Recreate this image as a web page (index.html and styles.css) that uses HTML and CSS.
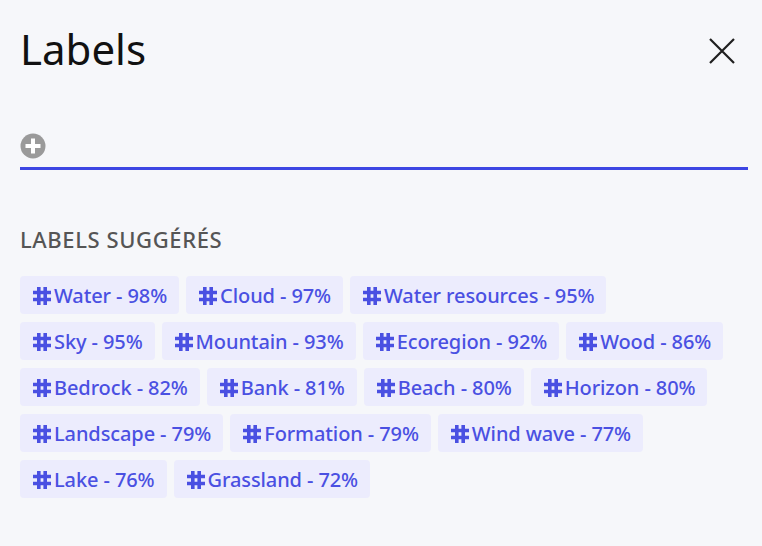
FILE: index.html
```html
<!DOCTYPE html>
<html lang="fr">
<head>
<meta charset="utf-8">
<title>Labels</title>
<link rel="stylesheet" href="styles.css">
</head>
<body>
<div class="panel">
  <header class="header">
    <h1 class="title">Labels</h1>
    <button class="close" aria-label="Fermer">
      <svg width="26" height="26" viewBox="0 0 26 26"><path d="M1 1L25 25M25 1L1 25" stroke="#1f1f1f" stroke-width="2.2" fill="none"/></svg>
    </button>
  </header>
  <div class="input-row">
    <svg class="plus" width="26" height="26" viewBox="0 0 26 26"><circle cx="13" cy="13" r="12.5" fill="#9a9a9a"/><path d="M13 5.5V20.5M5.5 13H20.5" stroke="#fff" stroke-width="4"/></svg>
  </div>
  <h2 class="section">LABELS SUGGÉRÉS</h2>
  <div class="chips">
    <span class="chip"><svg class="hash" viewBox="0 0 18 18"><path d="M4 0h3.6v18H4zM10.4 0H14v18h-3.6zM0 3.7h18v3.6H0zM0 10.7h18v3.6H0z"/></svg>Water - 98%</span>
    <span class="chip"><svg class="hash" viewBox="0 0 18 18"><path d="M4 0h3.6v18H4zM10.4 0H14v18h-3.6zM0 3.7h18v3.6H0zM0 10.7h18v3.6H0z"/></svg>Cloud - 97%</span>
    <span class="chip"><svg class="hash" viewBox="0 0 18 18"><path d="M4 0h3.6v18H4zM10.4 0H14v18h-3.6zM0 3.7h18v3.6H0zM0 10.7h18v3.6H0z"/></svg>Water resources - 95%</span>
    <span class="chip"><svg class="hash" viewBox="0 0 18 18"><path d="M4 0h3.6v18H4zM10.4 0H14v18h-3.6zM0 3.7h18v3.6H0zM0 10.7h18v3.6H0z"/></svg>Sky - 95%</span>
    <span class="chip"><svg class="hash" viewBox="0 0 18 18"><path d="M4 0h3.6v18H4zM10.4 0H14v18h-3.6zM0 3.7h18v3.6H0zM0 10.7h18v3.6H0z"/></svg>Mountain - 93%</span>
    <span class="chip"><svg class="hash" viewBox="0 0 18 18"><path d="M4 0h3.6v18H4zM10.4 0H14v18h-3.6zM0 3.7h18v3.6H0zM0 10.7h18v3.6H0z"/></svg>Ecoregion - 92%</span>
    <span class="chip"><svg class="hash" viewBox="0 0 18 18"><path d="M4 0h3.6v18H4zM10.4 0H14v18h-3.6zM0 3.7h18v3.6H0zM0 10.7h18v3.6H0z"/></svg>Wood - 86%</span>
    <span class="chip"><svg class="hash" viewBox="0 0 18 18"><path d="M4 0h3.6v18H4zM10.4 0H14v18h-3.6zM0 3.7h18v3.6H0zM0 10.7h18v3.6H0z"/></svg>Bedrock - 82%</span>
    <span class="chip"><svg class="hash" viewBox="0 0 18 18"><path d="M4 0h3.6v18H4zM10.4 0H14v18h-3.6zM0 3.7h18v3.6H0zM0 10.7h18v3.6H0z"/></svg>Bank - 81%</span>
    <span class="chip"><svg class="hash" viewBox="0 0 18 18"><path d="M4 0h3.6v18H4zM10.4 0H14v18h-3.6zM0 3.7h18v3.6H0zM0 10.7h18v3.6H0z"/></svg>Beach - 80%</span>
    <span class="chip"><svg class="hash" viewBox="0 0 18 18"><path d="M4 0h3.6v18H4zM10.4 0H14v18h-3.6zM0 3.7h18v3.6H0zM0 10.7h18v3.6H0z"/></svg>Horizon - 80%</span>
    <span class="chip"><svg class="hash" viewBox="0 0 18 18"><path d="M4 0h3.6v18H4zM10.4 0H14v18h-3.6zM0 3.7h18v3.6H0zM0 10.7h18v3.6H0z"/></svg>Landscape - 79%</span>
    <span class="chip"><svg class="hash" viewBox="0 0 18 18"><path d="M4 0h3.6v18H4zM10.4 0H14v18h-3.6zM0 3.7h18v3.6H0zM0 10.7h18v3.6H0z"/></svg>Formation - 79%</span>
    <span class="chip"><svg class="hash" viewBox="0 0 18 18"><path d="M4 0h3.6v18H4zM10.4 0H14v18h-3.6zM0 3.7h18v3.6H0zM0 10.7h18v3.6H0z"/></svg>Wind wave - 77%</span>
    <span class="chip"><svg class="hash" viewBox="0 0 18 18"><path d="M4 0h3.6v18H4zM10.4 0H14v18h-3.6zM0 3.7h18v3.6H0zM0 10.7h18v3.6H0z"/></svg>Lake - 76%</span>
    <span class="chip"><svg class="hash" viewBox="0 0 18 18"><path d="M4 0h3.6v18H4zM10.4 0H14v18h-3.6zM0 3.7h18v3.6H0zM0 10.7h18v3.6H0z"/></svg>Grassland - 72%</span>
  </div>
</div>
</body>
</html>
```
FILE: styles.css
```css
html, body {
  margin: 0;
  padding: 0;
  background: #f6f7fa;
}
body {
  font-family: "Noto Sans", "Open Sans", sans-serif;
  width: 762px;
  height: 546px;
  overflow: hidden;
}
.panel {
  padding: 20px 14px 0 20px;
}
.header {
  display: flex;
  justify-content: space-between;
  align-items: flex-start;
}
.title {
  margin: 0;
  font-size: 42px;
  font-weight: 400;
  line-height: 57px;
  color: #111;
}
.close {
  margin: 18px 13px 0 0;
  padding: 0;
  border: 0;
  background: none;
  width: 26px;
  height: 26px;
  display: block;
}
.close svg { display: block; }
.input-row {
  margin-top: 56px;
  padding-bottom: 8px;
  border-bottom: 3px solid #3d46e3;
  display: flex;
  align-items: center;
}
.plus { display: block; }
.section {
  margin: 55px 0 0;
  font-size: 22px;
  line-height: 28px;
  font-weight: 500;
  letter-spacing: 0.6px;
  color: #555;
}
.chips {
  margin-top: 23px;
  display: flex;
  flex-wrap: wrap;
  gap: 8px 7px;
}
.chip {
  display: inline-flex;
  align-items: center;
  height: 38px;
  padding: 1px 12px 0 13px;
  background: #ececfd;
  border-radius: 4px;
  color: #4a50e2;
  font-size: 20px;
  letter-spacing: -0.1px;
  font-weight: 500;
  box-sizing: border-box;
}
.hash {
  width: 18px;
  height: 18px;
  fill: #4a50e2;
  margin-right: 3px;
  flex: none;
}
```
